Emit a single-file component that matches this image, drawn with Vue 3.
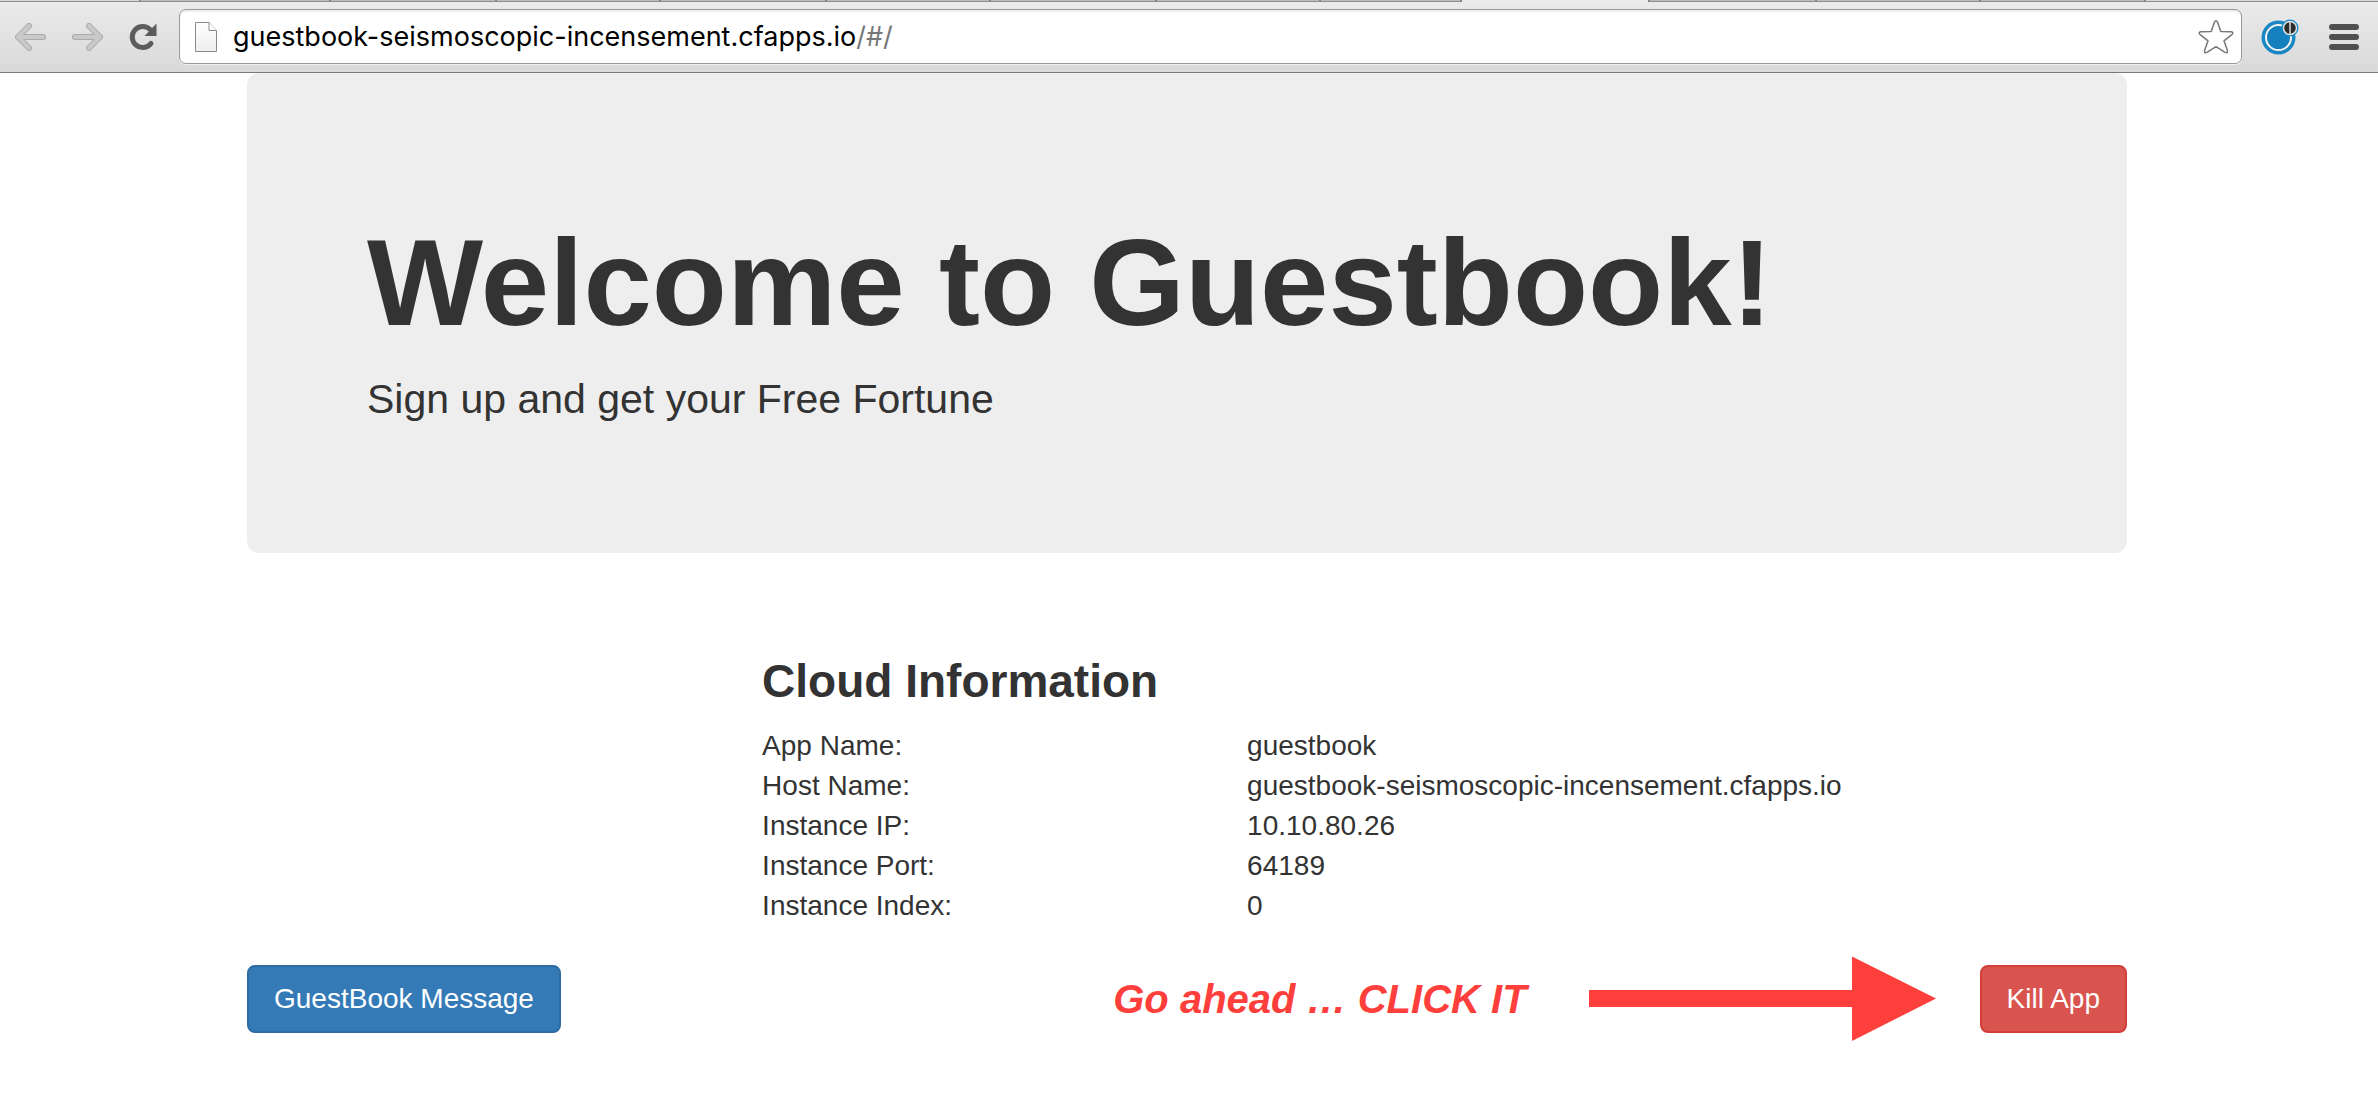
<script setup>
import { ref } from 'vue'

const host = 'guestbook-seismoscopic-incensement.cfapps.io'
const backgroundTabsLeft = [190, 166, 164, 166, 164, 166, 164, 141]
const backgroundTabsRight = [167, 164, 165]
const facts = ref([
  { label: 'App Name:', value: 'guestbook' },
  { label: 'Host Name:', value: host },
  { label: 'Instance IP:', value: '10.10.80.26' },
  { label: 'Instance Port:', value: '64189' },
  { label: 'Instance Index:', value: '0' },
])
</script>

<template>
  <div class="browser">
    <header class="chrome">
      <div class="tabs">
        <span class="tab first"></span>
        <span v-for="(w, i) in backgroundTabsLeft" :key="'l' + i" class="tab" :style="{ width: w + 'px' }"></span>
        <span class="tab active"></span>
        <span v-for="(w, i) in backgroundTabsRight" :key="'r' + i" class="tab" :style="{ width: w + 'px' }"></span>
        <span class="tab rest"></span>
      </div>
      <div class="toolbar">
        <nav class="nav">
          <button type="button" class="icon-btn" aria-label="Back" disabled>
            <svg width="32" height="28" viewBox="0 0 32 28" fill="none" stroke-linecap="round" stroke-linejoin="round">
              <path d="M14 3 L3 14 L14 25 M4 14 H28" stroke="#ababab" stroke-width="6" />
              <path d="M14 3 L3 14 L14 25 M4 14 H28" stroke="#c9c9c9" stroke-width="4" />
            </svg>
          </button>
          <button type="button" class="icon-btn" aria-label="Forward" disabled>
            <svg width="32" height="28" viewBox="0 0 32 28" fill="none" stroke-linecap="round" stroke-linejoin="round">
              <path d="M18 3 L29 14 L18 25 M28 14 H4" stroke="#ababab" stroke-width="6" />
              <path d="M18 3 L29 14 L18 25 M28 14 H4" stroke="#c9c9c9" stroke-width="4" />
            </svg>
          </button>
          <button type="button" class="icon-btn reload" aria-label="Reload">
            <svg width="28" height="28" viewBox="0 0 28 28">
              <path d="M22 20.500 A10.500 10.500 0 1 1 21.200 6.600" fill="none" stroke="#5c5c5c" stroke-width="5" stroke-linecap="round" />
              <path d="M27.500 0.500 V13 H15.500 Z" fill="#5c5c5c" />
            </svg>
          </button>
        </nav>
        <div class="address">
          <svg class="page-icon" width="24" height="32" viewBox="0 0 24 32">
            <defs>
              <linearGradient id="sheet" x1="0" y1="0" x2="0" y2="1">
                <stop offset="0" stop-color="#fff" />
                <stop offset="1" stop-color="#eee" />
              </linearGradient>
            </defs>
            <path d="M1.5 1.5 H15 L22.5 9.5 V30.5 H1.5 Z" fill="url(#sheet)" stroke="#8b8b8b" />
            <path d="M15 1.5 V9.5 H22.5" fill="#fff" stroke="#8b8b8b" />
          </svg>
          <a class="url" href="#/">{{ host }}<span class="path">/#/</span></a>
          <button type="button" class="icon-btn" aria-label="Bookmark this page">
            <svg width="36" height="36" viewBox="0 0 36 36">
              <path
                d="M16.4 3.3 Q18 0.3 19.6 3.3 L22.8 12.6 L33 12.8 Q36.3 13.4 33.8 15.6 L26 21.8 L29.4 31.6 Q30 34.8 27 33.4 L18 27.6 L9 33.4 Q6 34.8 6.6 31.6 L10 21.8 L2.2 15.6 Q-0.3 13.4 3 12.8 L13.2 12.6 Z"
                fill="#fff" stroke="#777" stroke-width="1.5" stroke-linejoin="round" />
            </svg>
          </button>
        </div>
        <button type="button" class="icon-btn extension" aria-label="Extension">
          <svg width="38" height="36" viewBox="0 0 38 36">
            <circle cx="17.500" cy="18.500" r="17" fill="#1987c4" />
            <circle cx="17.500" cy="18.500" r="12.500" fill="#1480bd" stroke="#f2f2f2" stroke-width="2" />
            <circle cx="29" cy="9" r="8.500" fill="#1987c4" />
            <circle cx="29" cy="9" r="6.500" fill="#2b2b2b" stroke="#ddd" stroke-width="1.500" />
            <path d="M29 3 V15" stroke="#ddd" stroke-width="1.500" />
          </svg>
        </button>
        <button type="button" class="icon-btn" aria-label="Menu">
          <svg width="30" height="26" viewBox="0 0 30 26" fill="#505050">
            <rect width="30" height="6" rx="3" />
            <rect y="10" width="30" height="6" rx="3" />
            <rect y="20" width="30" height="6" rx="3" />
          </svg>
        </button>
      </div>
    </header>

    <main class="page">
      <section class="jumbotron">
        <h1>Welcome to Guestbook!</h1>
        <p>Sign up and get your Free Fortune</p>
      </section>

      <section class="info">
        <h2>Cloud Information</h2>
        <table>
          <tbody>
            <tr v-for="fact in facts" :key="fact.label">
              <th scope="row">{{ fact.label }}</th>
              <td>{{ fact.value }}</td>
            </tr>
          </tbody>
        </table>
      </section>

      <div class="actions">
        <button type="button" class="btn primary">GuestBook Message</button>
        <div class="callout">
          <strong>Go ahead … CLICK IT</strong>
          <svg width="347" height="86" viewBox="0 0 347 86" fill="#ff3f3b" aria-hidden="true">
            <path d="M0 34 H263 V0.500 L347 42.500 L263 85 V51 H0 Z" />
          </svg>
        </div>
        <button type="button" class="btn danger">Kill App</button>
      </div>
    </main>
  </div>
</template>

<style>
body {
  margin: 0;
  background: #fff;
}
</style>

<style scoped>
.browser {
  color: #333;
  font: 28px/40px "Liberation Sans", Arial, sans-serif;
}

.chrome {
  display: flex;
  flex-direction: column;
  border-bottom: 1px solid #7a7a7a;
  background: linear-gradient(#ebebeb, #d9d9d9);
}

.tabs {
  display: flex;
  height: 2px;
  overflow: hidden;
}

.tab {
  box-sizing: border-box;
  flex: none;
  border-right: 2px solid #858585;
  border-bottom: 1px solid #8f8f8f;
  background: #bdbdbd;
}

.first {
  width: 141px;
  background: #d8d8d8;
}

.active {
  width: 188px;
  border-bottom: 0;
  background: #ebebeb;
}

.rest {
  flex: 1;
  border-right: 0;
  background: #d8d8d8;
}

.toolbar {
  display: flex;
  align-items: center;
  padding: 7px 19px 8px 15px;
}

.nav {
  display: flex;
  align-items: center;
  gap: 24px;
  margin-right: 22px;
}

.icon-btn {
  flex: none;
  display: flex;
  padding: 0;
  border: 0;
  background: none;
}

.reload {
  margin-left: 2px;
}

.address {
  flex: 1;
  display: flex;
  align-items: center;
  box-sizing: border-box;
  height: 55px;
  padding: 0 7px 0 14px;
  border: 1px solid #999;
  border-radius: 7px;
  background: #fff;
  box-shadow: inset 0 2px 1px #eee, 0 1px 0 #f0f0f0;
}

.url {
  flex: 1;
  margin-left: 15px;
  color: #000;
  font: 27px/40px Inter, sans-serif;
  text-decoration: none;
}

.path {
  color: #777;
}

.extension {
  margin: 0 30px 0 19px;
}

.page {
  max-width: 1880px;
  margin: 0 auto;
  padding: 0 34px 0 30px;
}

.jumbotron {
  padding: 140px 120px 124px;
  border-radius: 12px;
  background: #eee;
}

h1 {
  margin: 0;
  font-size: 123px;
  line-height: 139px;
}

.jumbotron p {
  margin: 17px 0 0;
  font-size: 41px;
  line-height: 60px;
}

.info {
  margin: 102px 0 30px 27.4%;
}

h2 {
  margin: 0 0 19px;
  font-size: 46px;
  line-height: 52px;
}

table {
  border-collapse: collapse;
}

th,
td {
  padding: 0;
  text-align: left;
  font-weight: 400;
}

th {
  width: 485px;
}

.actions {
  display: flex;
  align-items: center;
  justify-content: space-between;
}

.btn {
  box-sizing: border-box;
  padding: 12px 25px;
  border: 2px solid;
  border-radius: 8px;
  color: #fff;
  font: inherit;
}

.primary {
  border-color: #2e6da4;
  background: #337ab7;
}

.danger {
  border-color: #d43f3a;
  background: #d9534f;
}

.callout {
  display: flex;
  align-items: center;
  gap: 62px;
  margin: 0 44px 0 auto;
  color: #ff3f3b;
}

.callout strong {
  font-size: 40px;
  font-style: italic;
}
</style>
